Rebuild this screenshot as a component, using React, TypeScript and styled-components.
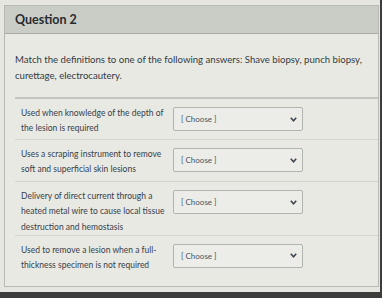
import styled, { createGlobalStyle } from 'styled-components';

const GlobalStyle = createGlobalStyle`
  html, body {
    margin: 0;
    padding: 0;
    background: #3b3c3b;
  }
  body {
    font-family: Lato, "Noto Sans", sans-serif;
  }
`;

const rows = [
  'Used when knowledge of the depth of the lesion is required',
  'Uses a scraping instrument to remove soft and superficial skin lesions',
  'Delivery of direct current through a heated metal wire to cause local tissue destruction and hemostasis',
  'Used to remove a lesion when a full-thickness specimen is not required',
];

const Screen = styled.div`
  width: 380px;
  height: 292px;
  box-sizing: border-box;
  padding: 5px 1px 0 4px;
  background: #e6e6e1;
`;

const Card = styled.section`
  height: 282px;
  box-sizing: border-box;
  border: 1px solid #b7bab4;
  background: #e9e9e4;
`;

const Header = styled.header`
  height: 28px;
  box-sizing: border-box;
  display: flex;
  align-items: center;
  padding-left: 10px;
  background: #c9cdc6;
  border-bottom: 1px solid #a8aca5;
  font-size: 12.5px;
  font-weight: 700;
  color: #262b2f;
`;

const Body = styled.div`
  padding: 18px 0 0 10px;
`;

const Prompt = styled.p`
  margin: 0 0 13px;
  font-size: 9.6px;
  line-height: 16px;
  color: #323a42;
`;

const Row = styled.div<{ $first?: boolean }>`
  display: grid;
  grid-template-columns: 150px 130px;
  column-gap: 2px;
  align-items: start;
  min-height: 42px;
  box-sizing: border-box;
  padding: 7px 0 0 6px;
  border-top: ${({ $first }) => ($first ? '2px solid #c3c6c0' : '1px solid #d3d5cf')};
`;

const Definition = styled.div`
  font-size: 8.5px;
  line-height: 15.3px;
  color: #36404a;
`;

const Select = styled.div`
  height: 24px;
  margin-top: 1px;
  box-sizing: border-box;
  display: flex;
  align-items: center;
  justify-content: space-between;
  padding: 0 5px 0 7px;
  border: 1px solid #b1b5af;
  border-radius: 2px;
  background: #ecece8;
  font-size: 8px;
  color: #4a545d;
`;

const Chevron = () => (
  <svg width="7" height="5" viewBox="0 0 7 5">
    <path d="M0.8 0.8 L3.5 3.8 L6.2 0.8" fill="none" stroke="#3f4850" strokeWidth="1.6" />
  </svg>
);

export default function App() {
  return (
    <>
      <GlobalStyle />
      <Screen>
        <Card>
          <Header>Question 2</Header>
          <Body>
            <Prompt>
              Match the definitions to one of the following answers: Shave biopsy, punch biopsy,
              curettage, electrocautery.
            </Prompt>
            {rows.map((text, i) => (
              <Row key={i} $first={i === 0}>
                <Definition>{text}</Definition>
                <Select>
                  <span>[ Choose ]</span>
                  <Chevron />
                </Select>
              </Row>
            ))}
          </Body>
        </Card>
      </Screen>
    </>
  );
}
